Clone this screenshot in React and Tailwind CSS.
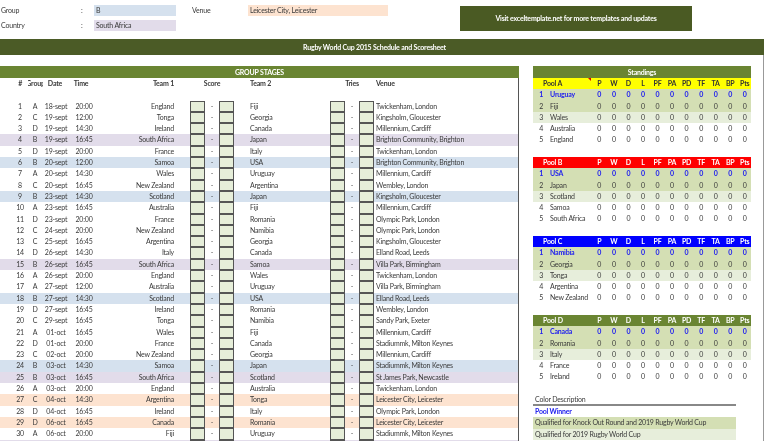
import React from "react";

const matches = [
  ["1", "A", "18-sept", "20:00", "England", "Fiji", "Twickenham, London", ""],
  ["2", "C", "19-sept", "12:00", "Tonga", "Georgia", "Kingsholm, Gloucester", ""],
  ["3", "D", "19-sept", "14:30", "Ireland", "Canada", "Millennium, Cardiff", ""],
  ["4", "B", "19-sept", "16:45", "South Africa", "Japan", "Brighton Community, Brighton", "bg-[#e2dcea]"],
  ["5", "D", "19-sept", "20:00", "France", "Italy", "Twickenham, London", ""],
  ["6", "B", "20-sept", "12:00", "Samoa", "USA", "Brighton Community, Brighton", "bg-[#d5e1ee]"],
  ["7", "A", "20-sept", "14:30", "Wales", "Uruguay", "Millennium, Cardiff", ""],
  ["8", "C", "20-sept", "16:45", "New Zealand", "Argentina", "Wembley, London", ""],
  ["9", "B", "23-sept", "14:30", "Scotland", "Japan", "Kingsholm, Gloucester", "bg-[#d5e1ee]"],
  ["10", "A", "23-sept", "16:45", "Australia", "Fiji", "Millennium, Cardiff", ""],
  ["11", "D", "23-sept", "20:00", "France", "Romania", "Olympic Park, London", ""],
  ["12", "C", "24-sept", "20:00", "New Zealand", "Namibia", "Olympic Park, London", ""],
  ["13", "C", "25-sept", "16:45", "Argentina", "Georgia", "Kingsholm, Gloucester", ""],
  ["14", "D", "26-sept", "14:30", "Italy", "Canada", "Elland Road, Leeds", ""],
  ["15", "B", "26-sept", "16:45", "South Africa", "Samoa", "Villa Park, Birmingham", "bg-[#e2dcea]"],
  ["16", "A", "26-sept", "20:00", "England", "Wales", "Twickenham, London", ""],
  ["17", "A", "27-sept", "12:00", "Australia", "Uruguay", "Villa Park, Birmingham", ""],
  ["18", "B", "27-sept", "14:30", "Scotland", "USA", "Elland Road, Leeds", "bg-[#d5e1ee]"],
  ["19", "D", "27-sept", "16:45", "Ireland", "Romania", "Wembley, London", ""],
  ["20", "C", "29-sept", "16:45", "Tonga", "Namibia", "Sandy Park, Exeter", ""],
  ["21", "A", "01-oct", "16:45", "Wales", "Fiji", "Millennium, Cardiff", ""],
  ["22", "D", "01-oct", "20:00", "France", "Canada", "Stadiummk, Milton Keynes", ""],
  ["23", "C", "02-oct", "20:00", "New Zealand", "Georgia", "Millennium, Cardiff", ""],
  ["24", "B", "03-oct", "14:30", "Samoa", "Japan", "Stadiummk, Milton Keynes", "bg-[#d5e1ee]"],
  ["25", "B", "03-oct", "16:45", "South Africa", "Scotland", "St James Park, Newcastle", "bg-[#e2dcea]"],
  ["26", "A", "03-oct", "20:00", "England", "Australia", "Twickenham, London", ""],
  ["27", "C", "04-oct", "14:30", "Argentina", "Tonga", "Leicester City, Leicester", "bg-[#fde3d0]"],
  ["28", "D", "04-oct", "16:45", "Ireland", "Italy", "Olympic Park, London", ""],
  ["29", "D", "06-oct", "16:45", "Canada", "Romania", "Leicester City, Leicester", "bg-[#fde3d0]"],
  ["30", "A", "06-oct", "20:00", "Fiji", "Uruguay", "Stadiummk, Milton Keynes", ""],
  ["", "", "", "", "", "", "", "bg-[#e2dcea]"],
];

const pools = [
  { name: "Pool A", head: "bg-[#ffff00] text-[#333]", teams: ["Uruguay", "Fiji", "Wales", "Australia", "England"], mark: true },
  { name: "Pool B", head: "bg-[#ff0000] text-white", teams: ["USA", "Japan", "Scotland", "Samoa", "South Africa"] },
  { name: "Pool C", head: "bg-[#0000ff] text-white", teams: ["Namibia", "Georgia", "Tonga", "Argentina", "New Zealand"] },
  { name: "Pool D", head: "bg-[#6a8532] text-white", teams: ["Canada", "Romania", "Italy", "France", "Ireland"] },
];

const stats = ["P", "W", "D", "L", "PF", "PA", "PD", "TF", "TA", "BP", "Pts"];
const rowTint = ["bg-[#d4dfb4] text-[#2222ee] font-bold", "bg-[#d4dfb4]", "bg-[#e7eedb]", "", ""];

const Box = () => <div className="bg-[#e6eed9] border border-[#555]" />;

const MatchRow = ({ m }) => (
  <div className={`grid grid-cols-[30px_10px_32px_24px_78px_16px_15px_14px_15px_16px_80px_15px_14px_15px_1fr] h-[11.3px] items-stretch leading-[11.3px] ${m[7]}`}>
    <div className="pl-[10px] text-center">{m[0]}</div>
    <div className="text-center">{m[1]}</div>
    <div className="text-center">{m[2]}</div>
    <div className="text-center">{m[3]}</div>
    <div className="text-right whitespace-nowrap">{m[4]}</div>
    <div />
    <Box />
    <div className="text-center">{m[0] && "-"}</div>
    <Box />
    <div />
    <div className="whitespace-nowrap">{m[5]}</div>
    <Box />
    <div className="text-center">{m[0] && "-"}</div>
    <Box />
    <div className="pl-[2px] whitespace-nowrap">{m[6]}</div>
  </div>
);

const Pool = ({ pool }) => (
  <div className="h-[79px]">
    <div className={`relative grid grid-cols-[59px_repeat(11,14.55px)] h-[11.3px] leading-[11.3px] font-bold ${pool.head}`}>
      <div className="pl-[10px]">{pool.name}</div>
      {stats.map((s) => (
        <div key={s} className="text-center">{s}</div>
      ))}
      {pool.mark && (
        <div className="absolute left-[55px] top-0 w-0 h-0 border-t-[3px] border-l-[3px] border-t-[#e00000] border-l-transparent" />
      )}
    </div>
    {pool.teams.map((t, i) => (
      <div key={t} className={`grid grid-cols-[17px_42px_repeat(11,14.55px)] h-[11.3px] leading-[11.3px] ${rowTint[i]}`}>
        <div className="text-right pr-[7px]">{i + 1}</div>
        <div className="whitespace-nowrap">{t}</div>
        {stats.map((s) => (
          <div key={s} className="text-center">0</div>
        ))}
      </div>
    ))}
  </div>
);

export default function App() {
  return (
    <div className="w-[768px] h-[441px] overflow-hidden bg-white text-[#3a3a3a] text-[7px] tracking-[-0.2px] font-['Lato','Liberation_Sans',sans-serif] blur-[0.3px]">
      {/* top form */}
      <div className="flex h-[39px] pt-[5px]">
        <div className="w-[460px] grid grid-cols-[81px_13px_82px_16px_56px_140px] grid-rows-[11px_11px] gap-y-[4px] leading-[11px]">
          <div className="pl-[1px]">Group</div>
          <div>:</div>
          <div className="bg-[#d5e1ee] pl-[2px]">B</div>
          <div />
          <div>Venue</div>
          <div className="bg-[#fde3d0] pl-[2px]">Leicester City, Leicester</div>
          <div className="pl-[1px]">Country</div>
          <div>:</div>
          <div className="bg-[#e2dcea] pl-[2px]">South Africa</div>
        </div>
        <div className="w-[232px] h-[25px] mt-[1px] bg-[#4a5a23] text-white font-bold flex items-center justify-center">
          Visit exceltemplate.net for more templates and updates
        </div>
      </div>

      <div className="w-[764px] h-[16px] pr-[15px] bg-[#4b5b26] text-white font-bold flex items-center justify-center">
        Rugby World Cup 2015 Schedule and Scoresheet
      </div>

      <div className="w-[764px] h-[386px] border-r border-[#999] pt-[11px] flex gap-[14px]">
        {/* group stages */}
        <div className="w-[519px] shrink-0">
          <div className="h-[12px] bg-[#6a8532] text-white font-bold flex items-center justify-center">GROUP STAGES</div>
          <div className="border-r border-[#555] h-[400px]">
            <div className="grid grid-cols-[28px_15px_24px_28px_79px_16px_44px_16px_80px_44px_1fr] h-[11.3px] leading-[11.3px] font-bold">
              <div className="text-right pr-[6px]">#</div>
              <div className="overflow-hidden flex justify-center">Group</div>
              <div className="text-center">Date</div>
              <div className="text-center">Time</div>
              <div className="text-right">Team 1</div>
              <div />
              <div className="text-center">Score</div>
              <div />
              <div>Team 2</div>
              <div className="text-center">Tries</div>
              <div className="pl-[2px]">Venue</div>
            </div>
            <div className="h-[11.3px]" />
            {matches.map((m, i) => (
              <MatchRow key={i} m={m} />
            ))}
          </div>
        </div>

        {/* standings */}
        <div className="w-[218px] shrink-0">
          <div className="h-[12px] bg-[#6a8532] text-white font-bold flex items-center justify-center">Standings</div>
          {pools.map((p) => (
            <Pool key={p.name} pool={p} />
          ))}
          <div className="w-[203px]">
            <div className="h-[12px] leading-[11px] pl-[2px] border-b-2 border-[#888]">Color Description</div>
            <div className="h-[11.3px] leading-[11.3px] pl-[2px] font-bold text-[#2222ee]">Pool Winner</div>
            <div className="h-[11.3px] leading-[11.3px] pl-[2px] bg-[#d4dfb4]">Qualified for Knock Out Round  and 2019 Rugby World Cup</div>
            <div className="h-[11.3px] leading-[11.3px] pl-[2px] bg-[#e7eedb]">Qualified for 2019 Rugby World Cup</div>
          </div>
        </div>
      </div>
    </div>
  );
}
